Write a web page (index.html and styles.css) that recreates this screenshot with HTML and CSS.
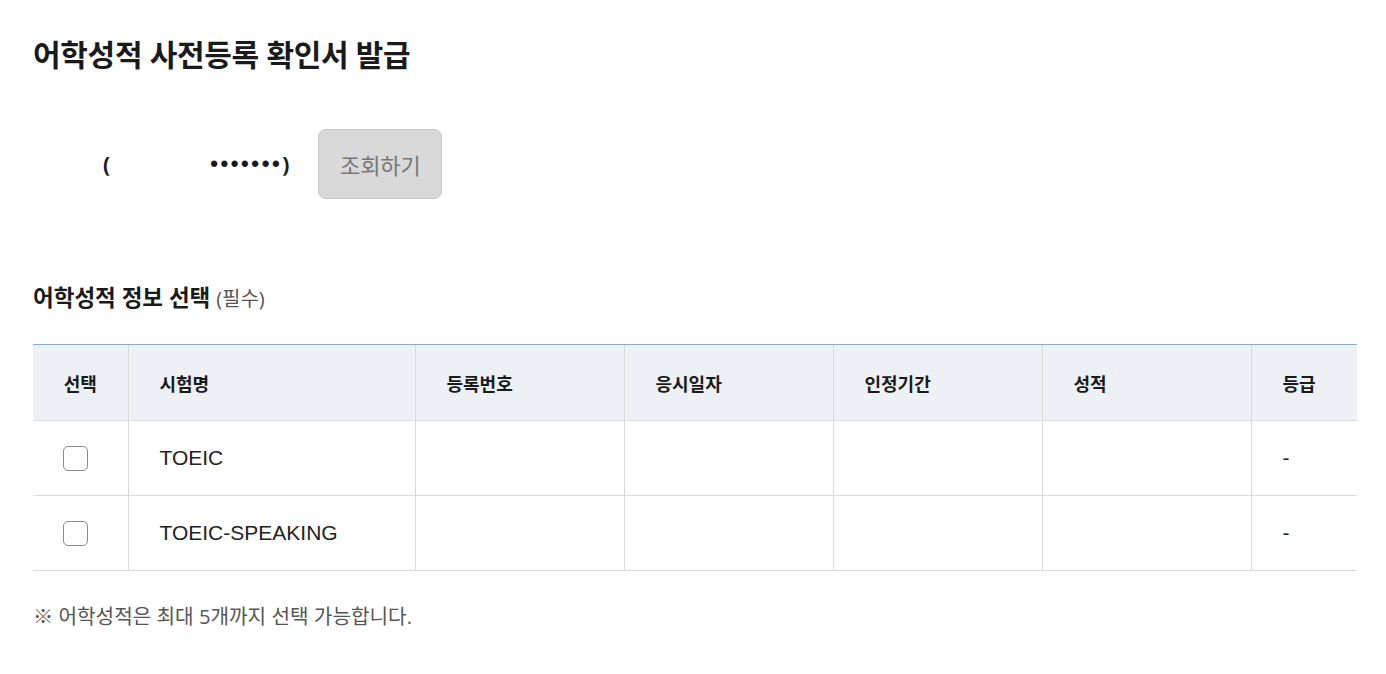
FILE: index.html
```html
<!DOCTYPE html>
<html lang="ko">
<head>
<meta charset="utf-8">
<title>어학성적 사전등록 확인서 발급</title>
<link rel="stylesheet" href="styles.css">
</head>
<body>
<main class="page">
  <h1 class="title">어학성적 사전등록 확인서 발급</h1>

  <div class="lookup">
    <div class="user"><span class="masked name"></span><span class="paren">(</span><span class="masked id"></span><span class="dots">•••••••</span><span class="paren">)</span></div>
    <button class="btn-lookup" type="button">조회하기</button>
  </div>

  <h2 class="section-title">어학성적 정보 선택 <span class="req">(필수)</span></h2>

  <table class="score-table">
    <colgroup>
      <col class="c-sel"><col class="c-name"><col class="c-mid"><col class="c-mid"><col class="c-mid"><col class="c-mid"><col class="c-grade">
    </colgroup>
    <thead>
      <tr>
        <th class="center">선택</th>
        <th>시험명</th>
        <th>등록번호</th>
        <th>응시일자</th>
        <th>인정기간</th>
        <th>성적</th>
        <th>등급</th>
      </tr>
    </thead>
    <tbody>
      <tr>
        <td class="center"><span class="chk"></span></td>
        <td>TOEIC</td>
        <td></td>
        <td></td>
        <td></td>
        <td></td>
        <td>-</td>
      </tr>
      <tr>
        <td class="center"><span class="chk"></span></td>
        <td>TOEIC-SPEAKING</td>
        <td></td>
        <td></td>
        <td></td>
        <td></td>
        <td>-</td>
      </tr>
    </tbody>
  </table>

  <p class="note">※ 어학성적은 최대 5개까지 선택 가능합니다.</p>
</main>
</body>
</html>
```

FILE: styles.css
```css
* { box-sizing: border-box; }
html, body { margin: 0; padding: 0; background: #fff; }
body {
  font-family: "Open Sans", "Noto Sans CJK KR", sans-serif;
  color: #222;
}
.page {
  width: 1323px;
  margin-left: 33px;
  padding-top: 33px;
}
.title {
  margin: 0;
  font-size: 30px;
  line-height: 44px;
  font-weight: 700;
  color: #1a1a1a;
  letter-spacing: -0.3px;
}
.lookup {
  display: flex;
  align-items: center;
  margin-top: 52px;
  gap: 29px;
}
.user {
  display: flex;
  align-items: center;
  font-size: 21px;
  font-weight: 700;
  color: #1a1a1a;
}
.masked.name { display: inline-block; width: 70px; }
.masked.id { display: inline-block; width: 100px; }
.dots { letter-spacing: 2.6px; font-family: "Liberation Sans", sans-serif; font-size: 22px; }
.btn-lookup {
  width: 124px;
  height: 70px;
  border: 1px solid #c6c6c6;
  border-radius: 8px;
  background: #d9d9d9;
  color: #777;
  font-family: inherit;
  font-size: 22px;
  padding: 0;
}
.section-title {
  margin: 84px 0 0;
  font-size: 22.5px;
  line-height: 30px;
  font-weight: 700;
  color: #1a1a1a;
}
.section-title .req {
  font-size: 20px;
  font-weight: 400;
  color: #555;
}
.score-table {
  margin-top: 30px;
  width: 1323px;
  border-collapse: collapse;
  table-layout: fixed;
}
.c-sel { width: 95px; }
.c-name { width: 287px; }
.c-mid { width: 209px; }
.c-grade { width: 106px; }
.score-table th, .score-table td {
  text-align: left;
  padding: 0 0 0 31px;
  border-left: 1px solid #d9d9d9;
  border-bottom: 1px solid #d9d9d9;
  vertical-align: middle;
}
.score-table th:first-child, .score-table td:first-child { border-left: 0; }
.score-table th {
  height: 76px;
  background: #edf0f5;
  border-top: 1px solid #8eaad0;
  font-size: 18px;
  font-weight: 700;
  color: #1a1a1a;
}
.score-table td {
  height: 75px;
  font-family: "Liberation Sans", "Noto Sans CJK KR", sans-serif;
  font-size: 21px;
  color: #222;
}
.score-table th.center { text-align: center; padding: 0; }
.score-table td.center { text-align: center; padding: 0 9px 0 0; }
.chk {
  display: inline-block;
  width: 25px;
  height: 25px;
  border: 1.5px solid #8a8a8a;
  border-radius: 5px;
  background: #fff;
  vertical-align: middle;
}
.note {
  margin: 30px 0 0;
  font-size: 20.2px;
  color: #555;
}
```
